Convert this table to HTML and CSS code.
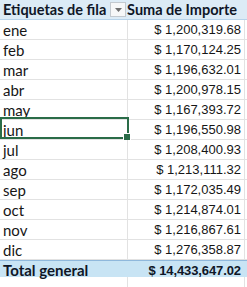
FILE: index.html
```html
<!DOCTYPE html>
<html lang="es">
<head>
<meta charset="utf-8">
<link rel="stylesheet" href="styles.css">
</head>
<body>
<div class="sheet">
  <div class="row head">
    <div class="cell label"><span>Etiquetas de fila</span><span class="filter"><svg width="7" height="4" viewBox="0 0 7 4"><path d="M0 0H7L3.5 4Z" fill="#6f6f6f"/></svg></span></div>
    <div class="cell value">Suma de Importe</div>
    <div class="cell pad"></div>
  </div>
  <div class="row"><div class="cell label">ene</div><div class="cell value num">$ 1,200,319.68</div><div class="cell pad"></div></div>
  <div class="row"><div class="cell label">feb</div><div class="cell value num">$ 1,170,124.25</div><div class="cell pad"></div></div>
  <div class="row"><div class="cell label">mar</div><div class="cell value num">$ 1,196,632.01</div><div class="cell pad"></div></div>
  <div class="row"><div class="cell label">abr</div><div class="cell value num">$ 1,200,978.15</div><div class="cell pad"></div></div>
  <div class="row"><div class="cell label">may</div><div class="cell value num">$ 1,167,393.72</div><div class="cell pad"></div></div>
  <div class="row"><div class="cell label selected">jun<span class="sel"><span class="handle"></span></span></div><div class="cell value num">$ 1,196,550.98</div><div class="cell pad"></div></div>
  <div class="row"><div class="cell label">jul</div><div class="cell value num">$ 1,208,400.93</div><div class="cell pad"></div></div>
  <div class="row"><div class="cell label">ago</div><div class="cell value num">$ 1,213,111.32</div><div class="cell pad"></div></div>
  <div class="row"><div class="cell label">sep</div><div class="cell value num">$ 1,172,035.49</div><div class="cell pad"></div></div>
  <div class="row"><div class="cell label">oct</div><div class="cell value num">$ 1,214,874.01</div><div class="cell pad"></div></div>
  <div class="row"><div class="cell label">nov</div><div class="cell value num">$ 1,216,867.61</div><div class="cell pad"></div></div>
  <div class="row"><div class="cell label">dic</div><div class="cell value num">$ 1,276,358.87</div><div class="cell pad"></div></div>
  <div class="row total">
    <div class="cell label">Total general</div>
    <div class="cell value num">$ 14,433,647.02</div>
    <div class="cell pad"></div>
  </div>
  <div class="row empty"><div class="cell label"></div><div class="cell value"></div><div class="cell pad"></div></div>
</div>
</body>
</html>
```
FILE: styles.css
```css
html, body {
  margin: 0;
  padding: 0;
  background: #ffffff;
}
.sheet {
  width: 247px;
  height: 287px;
  overflow: hidden;
  font-family: "Lato", "Open Sans", sans-serif;
  color: #161616;
}
.row {
  display: grid;
  grid-template-columns: 128px 117px 2px;
  height: 20px;
  box-sizing: border-box;
  border-bottom: 1px solid #e2e2e2;
}
.cell {
  display: flex;
  align-items: center;
  box-sizing: border-box;
  border-right: 1px solid #e2e2e2;
  white-space: nowrap;
  overflow: visible;
}
.cell.pad {
  border-right: none;
}
.label {
  padding-left: 3px;
  font-size: 15px;
  position: relative;
}
.value {
  justify-content: flex-end;
  padding-right: 3px;
}
.num {
  font-family: "Liberation Sans", Arial, sans-serif;
  font-size: 13px;
}
.head {
  background: #dcebf6;
  border-bottom: 1px solid #b7d3ea;
}
.head .cell {
  font-weight: 700;
  font-size: 14.5px;
  color: #0f1626;
  border-right-color: transparent;
}
.head .label {
  justify-content: space-between;
  padding-right: 1px;
}
.head .value {
  padding-right: 7px;
}
.filter {
  width: 16px;
  height: 15px;
  box-sizing: border-box;
  border: 1px solid #c3c9cf;
  background: #f6f7f8;
  display: flex;
  align-items: center;
  justify-content: center;
}
.total {
  background: #c8e4f4;
  border-top: 1px solid #8fb8dc;
  border-bottom: none;
  height: 17px;
}
.total .cell {
  font-weight: 700;
  color: #0f1626;
  border-right-color: transparent;
}
.total .label {
  font-size: 15px;
}
.total .num {
  font-size: 13px;
  letter-spacing: -0.1px;
}
.empty {
  border-bottom: none;
  height: 10px;
}
.selected .sel {
  position: absolute;
  left: 0;
  top: -3px;
  width: 129px;
  height: 22px;
  box-sizing: border-box;
  border: 2px solid #2a6c48;
  pointer-events: none;
}
.handle {
  position: absolute;
  right: -4px;
  bottom: -4px;
  width: 6px;
  height: 6px;
  background: #2a6c48;
  border: 1px solid #ffffff;
}
```
